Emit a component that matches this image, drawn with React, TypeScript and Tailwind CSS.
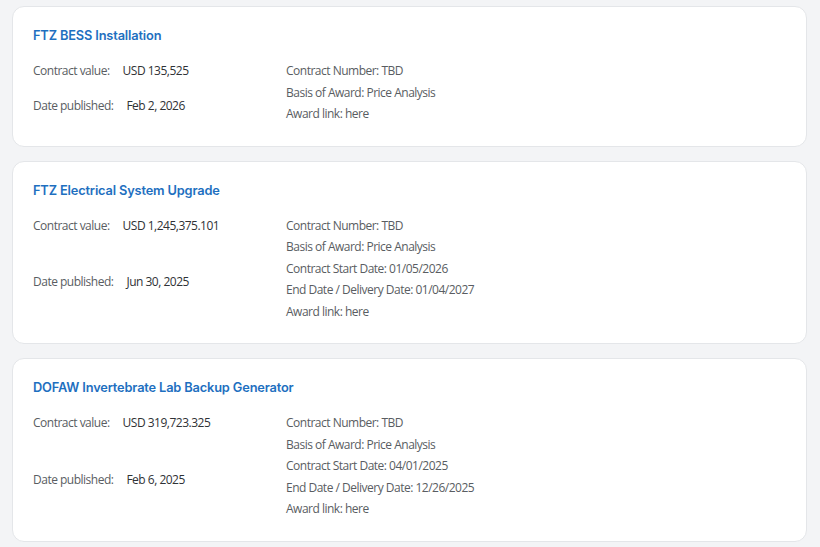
type Award = {
  title: string;
  value: string;
  published: string;
  details: string[];
};

const awards: Award[] = [
  {
    title: 'FTZ BESS Installation',
    value: 'USD 135,525',
    published: 'Feb 2, 2026',
    details: ['Contract Number: TBD', 'Basis of Award: Price Analysis', 'Award link: here'],
  },
  {
    title: 'FTZ Electrical System Upgrade',
    value: 'USD 1,245,375.101',
    published: 'Jun 30, 2025',
    details: [
      'Contract Number: TBD',
      'Basis of Award: Price Analysis',
      'Contract Start Date: 01/05/2026',
      'End Date / Delivery Date: 01/04/2027',
      'Award link: here',
    ],
  },
  {
    title: 'DOFAW Invertebrate Lab Backup Generator',
    value: 'USD 319,723.325',
    published: 'Feb 6, 2025',
    details: [
      'Contract Number: TBD',
      'Basis of Award: Price Analysis',
      'Contract Start Date: 04/01/2025',
      'End Date / Delivery Date: 12/26/2025',
      'Award link: here',
    ],
  },
];

function AwardCard({ award }: { award: Award }) {
  return (
    <div className="bg-white border border-[#e4e6e9] rounded-[12px] pt-[19px] pb-[21px] px-[20px]">
      <h3 className="text-[12.8px] leading-5 font-semibold text-[#1e6fc0] mb-[14px] font-['Inter',sans-serif] tracking-[-0.15px]">
        {award.title}
      </h3>
      <div className="flex text-[12px] leading-[21.5px] tracking-[-0.5px] font-['Open_Sans',sans-serif]">
        <div className="w-[253px] flex flex-col">
          <div className="flex gap-[13px]">
            <span className="text-[#595d62]">Contract value:</span>
            <span className="text-[#2f3236]">{award.value}</span>
          </div>
          <div className="flex-1 flex items-center pt-[6px] gap-[13px]">
            <span className="text-[#595d62]">Date published:</span>
            <span className="text-[#2f3236]">{award.published}</span>
          </div>
        </div>
        <div className="flex flex-col text-[#595d62]">
          {award.details.map((line) => (
            <span key={line}>{line}</span>
          ))}
        </div>
      </div>
    </div>
  );
}

export default function App() {
  return (
    <div className="min-h-[547px] bg-[#f3f4f6] pt-[6px] pl-[12px] pr-[13px] pb-[6px] flex flex-col gap-[14px]">
      {awards.map((award) => (
        <AwardCard key={award.title} award={award} />
      ))}
    </div>
  );
}
